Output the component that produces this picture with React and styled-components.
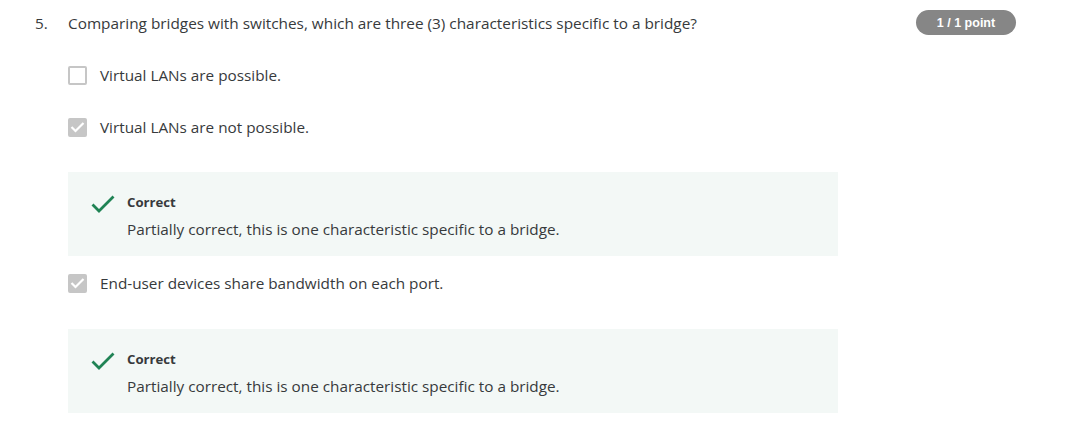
import React from "react";
import styled, { createGlobalStyle } from "styled-components";

const GlobalStyle = createGlobalStyle`
  * { box-sizing: border-box; }
  body {
    margin: 0;
    background: #fff;
    font-family: "Open Sans", "Noto Sans", sans-serif;
    color: #373a3c;
  }
`;

const Page = styled.div`
  width: 1077px;
  height: 424px;
  padding: 10px 61px 0 35px;
  overflow: hidden;
`;

const QuestionRow = styled.div`
  display: flex;
  align-items: center;
  height: 25px;
`;

const Number = styled.span`
  width: 33px;
  font-size: 15.3px;
`;

const Prompt = styled.span`
  flex: 1;
  font-size: 15.35px;
`;

const Badge = styled.span`
  width: 100px;
  height: 25px;
  border-radius: 13px;
  background: #868686;
  color: #fff;
  font-family: "Liberation Sans", Arial, sans-serif;
  font-weight: 700;
  font-size: 12.5px;
  display: flex;
  align-items: center;
  justify-content: center;
`;

const Options = styled.div`
  padding-left: 33px;
  display: flex;
  flex-direction: column;
`;

const Option = styled.label`
  display: flex;
  align-items: center;
  gap: 13px;
  font-size: 15.3px;
  height: 20px;
  margin-top: ${(p) => p.$top}px;
`;

const Box = styled.span`
  width: 19px;
  height: 19px;
  border-radius: 2px;
  border: 2px solid #c6c6c6;
  background: ${(p) => (p.$checked ? "#c6c6c6" : "#fff")};
  display: flex;
  align-items: center;
  justify-content: center;
`;

const Feedback = styled.div`
  width: 770px;
  height: 84px;
  margin-top: ${(p) => p.$top}px;
  background: #f3f8f6;
  display: flex;
  padding: 20px 0 0 23px;
  gap: 12px;
`;

const FeedbackText = styled.div`
  display: flex;
  flex-direction: column;
`;

const Title = styled.div`
  font-size: 13.2px;
  font-weight: 700;
  color: #373a3c;
  line-height: 20px;
`;

const Explain = styled.div`
  font-size: 15.3px;
  line-height: 20px;
  margin-top: 7px;
`;

const Tick = () => (
  <svg width="15" height="12" viewBox="0 0 15 12">
    <path d="M1.5 6 L5.5 10 L13.5 2" fill="none" stroke="#fff" strokeWidth="2.2" />
  </svg>
);

const GreenCheck = () => (
  <svg width="24" height="20" viewBox="0 0 24 20" style={{ marginTop: 2 }}>
    <path d="M1.5 10.5 L8 17 L22.5 2.5" fill="none" stroke="#1f8354" strokeWidth="2.8" />
  </svg>
);

const Check = ({ checked, top, children }) => (
  <Option $top={top}>
    <Box $checked={checked}>{checked && <Tick />}</Box>
    <span>{children}</span>
  </Option>
);

const Correct = ({ top }) => (
  <Feedback $top={top}>
    <GreenCheck />
    <FeedbackText>
      <Title>Correct</Title>
      <Explain>Partially correct, this is one characteristic specific to a bridge.</Explain>
    </FeedbackText>
  </Feedback>
);

export default function App() {
  return (
    <>
      <GlobalStyle />
      <Page>
        <QuestionRow>
          <Number>5.</Number>
          <Prompt>Comparing bridges with switches, which are three (3) characteristics specific to a bridge?</Prompt>
          <Badge>1 / 1 point</Badge>
        </QuestionRow>
        <Options>
          <Check top={30}>Virtual LANs are possible.</Check>
          <Check checked top={32}>Virtual LANs are not possible.</Check>
          <Correct top={35} />
          <Check checked top={17}>End-user devices share bandwidth on each port.</Check>
          <Correct top={36} />
        </Options>
      </Page>
    </>
  );
}
